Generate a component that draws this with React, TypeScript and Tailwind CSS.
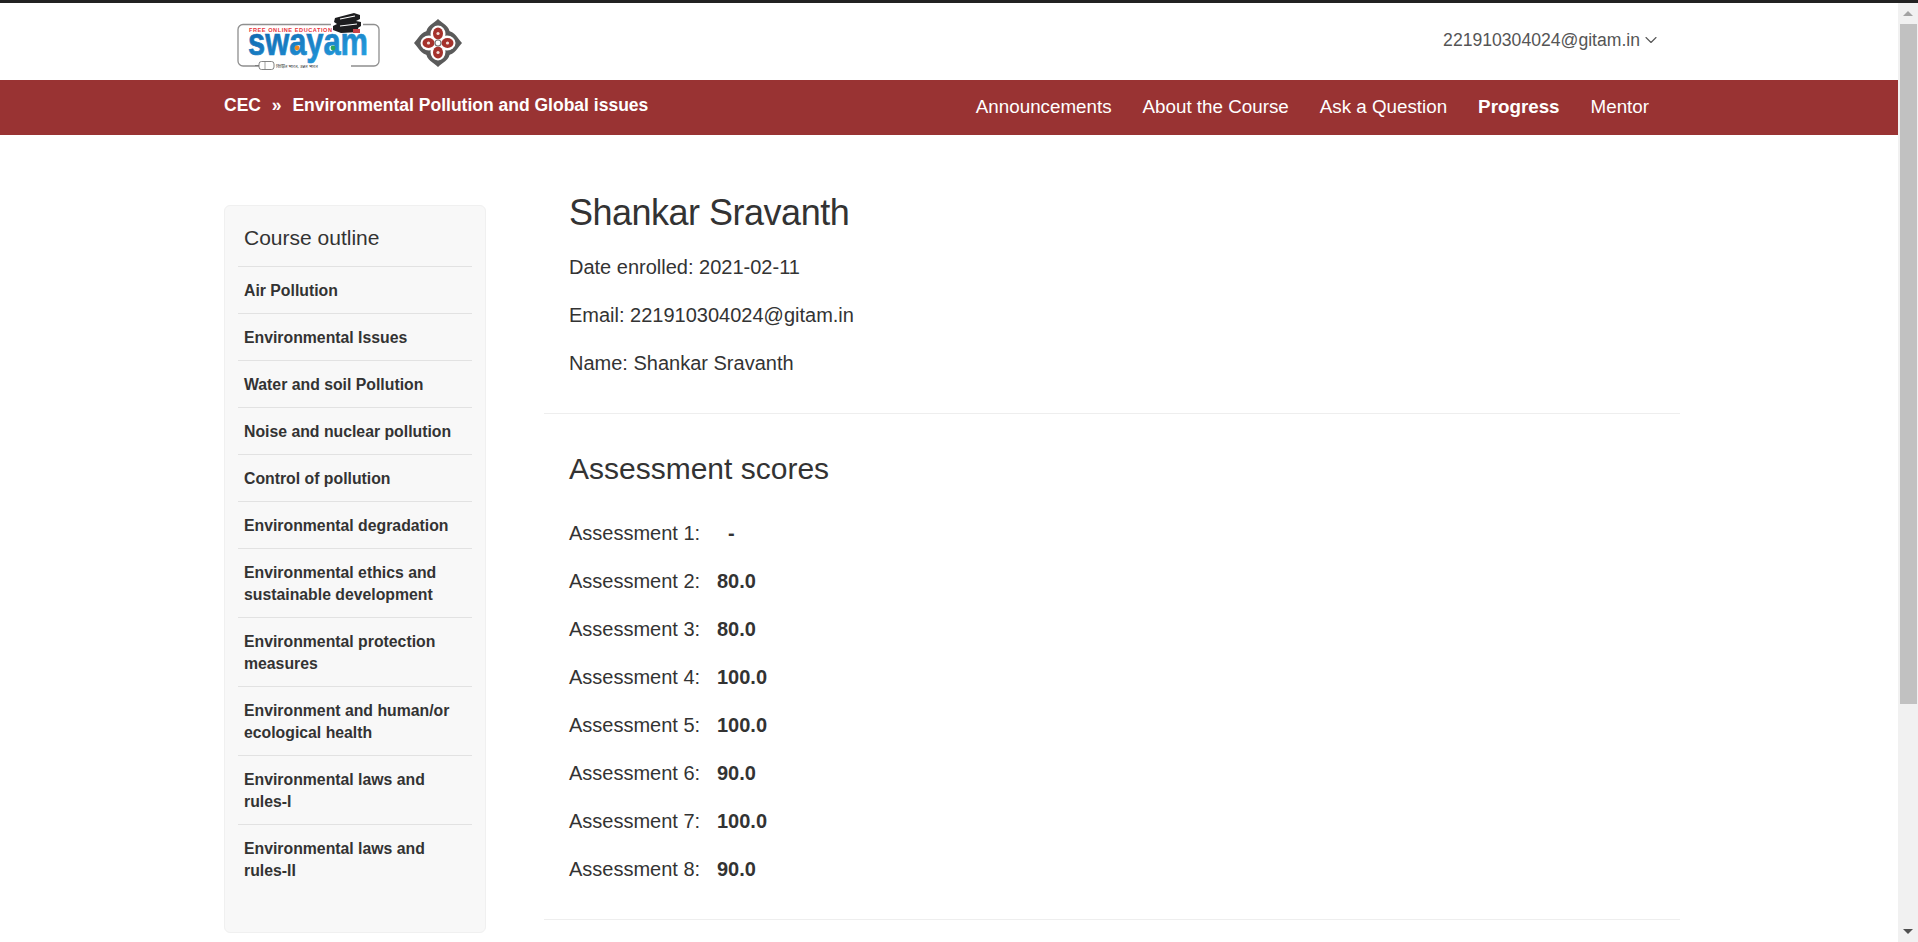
import { ChevronDown } from 'lucide-react';

const outline = [
  ['Air Pollution'],
  ['Environmental Issues'],
  ['Water and soil Pollution'],
  ['Noise and nuclear pollution'],
  ['Control of pollution'],
  ['Environmental degradation'],
  ['Environmental ethics and', 'sustainable development'],
  ['Environmental protection', 'measures'],
  ['Environment and human/or', 'ecological health'],
  ['Environmental laws and', 'rules-I'],
  ['Environmental laws and', 'rules-II'],
];

const scores = ['-', '80.0', '80.0', '100.0', '100.0', '90.0', '100.0', '90.0'];

const navLinks = ['Announcements', 'About the Course', 'Ask a Question', 'Progress', 'Mentor'];

function SwayamLogo() {
  return (
    <svg width="146" height="58" viewBox="0 0 146 58">
      <defs>
        <linearGradient id="swayamBlue" x1="0" y1="0" x2="1" y2="1">
          <stop offset="0" stopColor="#0d5fa8" />
          <stop offset="1" stopColor="#27a4e4" />
        </linearGradient>
      </defs>
      <rect x="1" y="11.5" width="141" height="41.5" rx="5" fill="none" stroke="#8f8f8f" strokeWidth="1.3" />
      <rect x="22" y="49" width="92" height="8" fill="#fff" />
      <rect x="94" y="6" width="32" height="8" fill="#fff" />
      <text x="12" y="19" fontSize="5.6" fontWeight="700" fill="#e8343c" letterSpacing="0.55" fontFamily="Liberation Sans">FREE ONLINE EDUCATION</text>
      <text x="11" y="42" fontSize="38" fontWeight="700" fill="url(#swayamBlue)" stroke="url(#swayamBlue)" strokeWidth="0.7" textLength="120" lengthAdjust="spacingAndGlyphs" fontFamily="Liberation Sans">swayam</text>
      <circle cx="60" cy="35" r="2.4" fill="#f08a1c" />
      <circle cx="96" cy="35" r="2.4" fill="#2ca55a" />
      <text x="39" y="55" fontSize="4.6" fill="#444" fontFamily="Noto Sans">शिक्षित भारत, उन्नत भारत</text>
      <rect x="22" y="48.5" width="15" height="8" rx="2.5" fill="#fff" stroke="#777" strokeWidth="0.9" />
      <path d="M28 48.5v8" stroke="#777" strokeWidth="0.7" />
      <path d="M18 52.5h4" stroke="#777" strokeWidth="0.9" />
      <path d="M98 5l19-5 6 2v4l-4 2 5 1v4l-3 2 1 4-18 1-8-3v-4l4-2-3-2z" fill="#1d1d1f" />
      <path d="M103 6l15-3M103 13l17-2" stroke="#fff" strokeWidth="1.1" />
      <rect x="116" y="16" width="7" height="4" fill="#c7444a" />
    </svg>
  );
}

function CecLogo() {
  return (
    <svg width="48" height="48" viewBox="0 0 48 48" className="mt-[3px]">
      <g fill="#5a5a5a">
        <path d="M24 0C28 4 36 7 36 15C36 20 30 22 24 22C18 22 12 20 12 15C12 7 20 4 24 0Z" />
        <path d="M24 48C28 44 36 41 36 33C36 28 30 26 24 26C18 26 12 28 12 33C12 41 20 44 24 48Z" />
        <path d="M0 24C4 28 7 36 15 36C20 36 22 30 22 24C22 18 20 12 15 12C7 12 4 20 0 24Z" />
        <path d="M48 24C44 28 41 36 33 36C28 36 26 30 26 24C26 18 28 12 33 12C41 12 44 20 48 24Z" />
      </g>
      <g fill="#fff">
        <ellipse cx="24" cy="15" rx="7.5" ry="8.5" />
        <ellipse cx="24" cy="33" rx="7.5" ry="8.5" />
        <ellipse cx="15" cy="24" rx="8.5" ry="7.5" />
        <ellipse cx="33" cy="24" rx="8.5" ry="7.5" />
      </g>
      <g fill="#a5322c">
        <ellipse cx="24" cy="14.5" rx="5" ry="6" />
        <ellipse cx="24" cy="33.5" rx="5" ry="6" />
        <ellipse cx="14.5" cy="24" rx="6" ry="5" />
        <ellipse cx="33.5" cy="24" rx="6" ry="5" />
      </g>
      <g fill="#f3dcd8">
        <circle cx="24" cy="14.5" r="1.6" />
        <circle cx="24" cy="33.5" r="1.6" />
        <circle cx="14.5" cy="24" r="1.6" />
        <circle cx="33.5" cy="24" r="1.6" />
      </g>
      <circle cx="24" cy="24" r="3" fill="#fff" stroke="#777" strokeWidth="1.2" />
    </svg>
  );
}

function Scrollbar() {
  return (
    <div className="flex h-full w-5 shrink-0 flex-col items-center bg-[#f1f1f1]">
      <div className="flex h-[21px] w-full shrink-0 items-center justify-center">
        <div className="h-0 w-0 border-x-[5px] border-b-[5px] border-x-transparent border-b-[#a3a3a3]" />
      </div>
      <div className="h-[680px] w-[17px] shrink-0 bg-[#c1c1c1]" />
      <div className="flex-1" />
      <div className="flex h-[21px] w-full shrink-0 items-center justify-center">
        <div className="h-0 w-0 border-x-[5px] border-t-[5px] border-x-transparent border-t-[#505050]" />
      </div>
    </div>
  );
}

export default function App() {
  return (
    <div className="flex h-[942px] flex-col overflow-hidden bg-white font-['Liberation_Sans',Arial,sans-serif] text-[#333]">
      <div className="h-[3px] shrink-0 bg-[#222]" />
      <div className="flex min-h-0 flex-1">
        <div className="min-w-0 flex-1 overflow-hidden">
          <header className="flex h-[77px] items-center justify-between pl-[237px] pr-[237px]">
            <div className="flex items-center gap-[31px]">
              <SwayamLogo />
              <CecLogo />
            </div>
            <div className="flex items-center gap-px pb-[2px] text-[17.6px] text-[#555]">
              221910304024@gitam.in
              <ChevronDown size={20} strokeWidth={1.3} />
            </div>
          </header>

          <nav className="flex h-[55px] items-center justify-between bg-[#993333] pl-[224px] pr-[249px] text-white">
            <div className="pb-[5px] text-[17.5px] font-bold">
              CEC <span className="mx-[6px]">»</span> Environmental Pollution and Global issues
            </div>
            <div className="flex items-center gap-[31px] text-[18.8px]">
              {navLinks.map((link) => (
                <a key={link} className={link === 'Progress' ? 'font-bold' : ''}>
                  {link}
                </a>
              ))}
            </div>
          </nav>

          <div className="flex gap-[58px] pl-[224px] pt-[70px]">
            <aside className="h-[728px] w-[262px] shrink-0 rounded-md border border-[#f0f0f0] bg-[#f8f8f8] px-[13px]">
              <div className="border-b border-[#e2e2e2] px-[6px] pb-[16px] pt-[20px] text-[21px] leading-[24px]">
                Course outline
              </div>
              {outline.map((lines) => (
                <div key={lines[0]} className="border-b border-[#e2e2e2] px-[6px] pb-[11px] pt-[13px] text-[15.8px] font-bold leading-[22px] text-[#333] last:border-b-0">
                  {lines.map((line) => (
                    <div key={line}>{line}</div>
                  ))}
                </div>
              ))}
            </aside>

            <main className="w-[1136px]">
              <section className="-mt-[12px] border-b border-[#eeeeee] px-[25px] pb-[37px]">
                <h1 className="mb-[21px] text-[36px] leading-[40px] tracking-[-0.5px]">Shankar Sravanth</h1>
                <div className="flex flex-col gap-[22px] text-[20px] leading-[26px]">
                  <p>Date enrolled: 2021-02-11</p>
                  <p>Email: 221910304024@gitam.in</p>
                  <p>Name: Shankar Sravanth</p>
                </div>
              </section>
              <section className="border-b border-[#eeeeee] px-[25px] pb-[37px] pt-[38px]">
                <h2 className="mb-[34px] text-[30px] leading-[34px]">Assessment scores</h2>
                <div className="flex flex-col gap-[22px] text-[20px] leading-[26px]">
                  {scores.map((score, i) => (
                    <div key={i} className="flex">
                      <span className="w-[148px]">Assessment {i + 1}:</span>
                      <b className={score === '-' ? 'pl-[11px]' : ''}>{score}</b>
                    </div>
                  ))}
                </div>
              </section>
            </main>
          </div>
        </div>
        <Scrollbar />
      </div>
    </div>
  );
}
